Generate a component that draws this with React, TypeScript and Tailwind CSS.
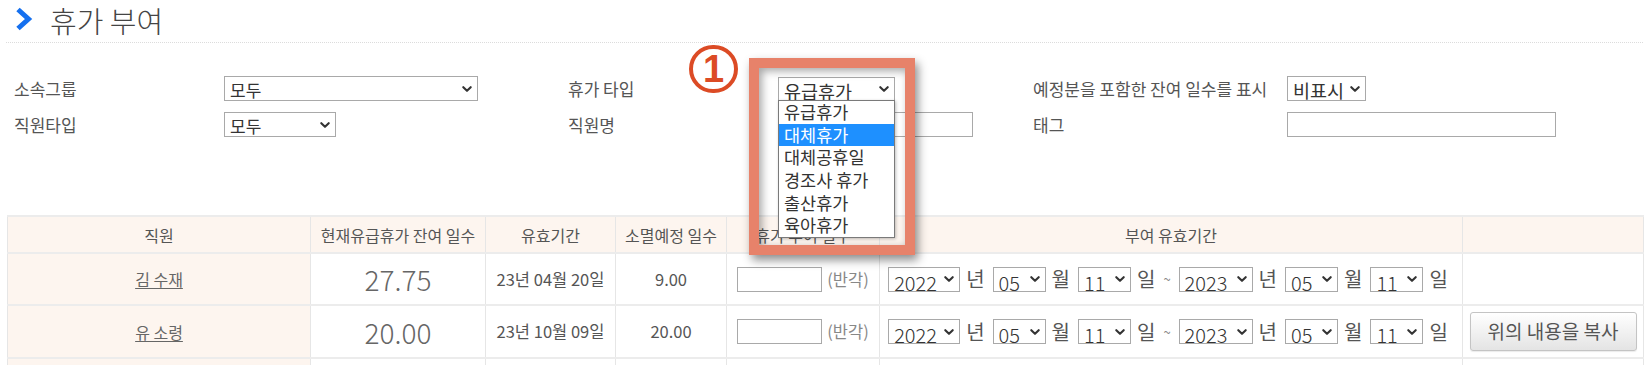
import React from 'react';

const FONT = "font-['Noto_Sans_CJK_KR','Noto_Sans',sans-serif]";

const Chevron: React.FC<{ className?: string }> = ({ className = '' }) => (
  <svg viewBox="0 0 10 6" className={className} fill="none" stroke="#333" strokeWidth="2.1" strokeLinecap="round" strokeLinejoin="round">
    <path d="M1.3 1.2L5 4.8 8.7 1.2" />
  </svg>
);

interface SelectBoxProps {
  value: string;
  options?: string[];
  className: string;
  textClass?: string;
}

const SelectBox: React.FC<SelectBoxProps> = ({ value, options, className, textClass = 'text-[17px]' }) => (
  <span className={`relative inline-block align-middle ${className}`}>
    <select
      defaultValue={value}
      className={`appearance-none w-full h-full border border-[#a9a9a9] bg-white pl-[5px] pr-[16px] text-[#333] outline-none rounded-none ${textClass}`}
    >
      {(options ?? [value]).map(o => <option key={o}>{o}</option>)}
    </select>
    <Chevron className="pointer-events-none absolute right-[6px] top-1/2 -translate-y-1/2 w-[10px] h-[6px]" />
  </span>
);

const DateRange: React.FC = () => {
  const unit = "mx-[6px] text-[20px] text-[#555] leading-none";
  const sel = "h-[25px]";
  const txt = "text-[20px] font-light";
  return (
    <div className="flex items-center justify-center">
      <SelectBox value="2022" className={`${sel} w-[72px]`} textClass={txt} />
      <span className={unit}>년</span>
      <SelectBox value="05" className={`${sel} w-[53px] ml-[2px]`} textClass={txt} />
      <span className={unit}>월</span>
      <SelectBox value="11" className={`${sel} w-[53px] ml-[2px]`} textClass={txt} />
      <span className={unit}>일</span>
      <span className="mx-[2px] text-[13px] text-[#888]">~</span>
      <SelectBox value="2023" className={`${sel} w-[74px] ml-[6px]`} textClass={txt} />
      <span className={unit}>년</span>
      <SelectBox value="05" className={`${sel} w-[53px] ml-[2px]`} textClass={txt} />
      <span className={unit}>월</span>
      <SelectBox value="11" className={`${sel} w-[53px] ml-[2px]`} textClass={txt} />
      <span className={unit}>일</span>
    </div>
  );
};

const rows = [
  { name: '김 수재', remain: '27.75', until: '23년 04월 20일', expire: '9.00', copy: false },
  { name: '유 소령', remain: '20.00', until: '23년 10월 09일', expire: '20.00', copy: true },
];

const leaveTypes = ['유급휴가', '대체휴가', '대체공휴일', '경조사 휴가', '출산휴가', '육아휴가'];

const App: React.FC = () => {
  const th = "border-x border-[#e6e6e6] font-normal text-[16px] text-[#555] text-center align-middle";
  const td = "border-x border-[#e6e6e6] text-center align-middle";

  return (
    <div className={`relative w-[1651px] h-[365px] overflow-hidden bg-white ${FONT}`}>
      <div className="ml-[6px] mr-[8px] h-[43px] flex items-center border-b border-dotted border-[#dcdcdc]">
        <svg viewBox="0 0 18 24" className="ml-[9px] w-[18px] h-[24px] -translate-y-[2px]" fill="none" stroke="#1570ef" strokeWidth="5" strokeLinejoin="miter">
          <path d="M3 2.5L13.5 12 3 21.5" />
        </svg>
        <h1 className="ml-[17px] text-[29px] leading-normal text-[#444] font-light">휴가 부여</h1>
      </div>

      <div className="mt-[33px] pl-[14px] grid grid-cols-[210px_344px_210px_255px_254px_1fr] grid-rows-[25px_25px] gap-y-[11px] items-center text-[17px] text-[#555]">
        <span>소속그룹</span>
        <SelectBox value="모두" className="h-[25px] w-[254px]" />
        <span>휴가 타입</span>
        <SelectBox value="유급휴가" options={leaveTypes} className="h-[24px] w-[117px]" textClass="text-[18.5px]" />
        <span>예정분을 포함한 잔여 일수를 표시</span>
        <SelectBox value="비표시" options={['비표시', '표시']} className="h-[25px] w-[79px]" textClass="text-[18.5px]" />

        <span>직원타입</span>
        <SelectBox value="모두" className="h-[25px] w-[112px]" />
        <span>직원명</span>
        <input type="text" className="h-[25px] w-[195px] border border-[#a9a9a9] bg-white outline-none" />
        <span>태그</span>
        <input type="text" className="h-[25px] w-[269px] border border-[#a9a9a9] bg-white outline-none" />
      </div>

      <table className="mt-[78px] ml-[7px] w-[1636px] table-fixed border-collapse">
        <colgroup>
          <col className="w-[303px]" />
          <col className="w-[175px]" />
          <col className="w-[130px]" />
          <col className="w-[111px]" />
          <col className="w-[153px]" />
          <col className="w-[583px]" />
          <col className="w-[181px]" />
        </colgroup>
        <thead>
          <tr className="h-[37px] bg-[#fdf5ef] border-y-2 border-[#ececec]">
            <th className={th}>직원</th>
            <th className={th}>현재유급휴가 잔여 일수</th>
            <th className={th}>유효기간</th>
            <th className={th}>소멸예정 일수</th>
            <th className={th}>휴가 부여 일수</th>
            <th className={th}>부여 유효기간</th>
            <th className={th}></th>
          </tr>
        </thead>
        <tbody>
          {rows.map((r, i) => (
            <tr key={r.name} className={`${i === 0 ? 'h-[52px]' : 'h-[53px]'} border-b-2 border-[#ececec]`}>
              <td className={`${td} bg-[#fdf5ef]`}>
                <a href="#" className="text-[16px] text-[#666] underline underline-offset-2">{r.name}</a>
              </td>
              <td className={`${td} text-[28px] font-light text-[#666]`}>{r.remain}</td>
              <td className={`${td} text-[16.5px] text-[#555]`}>{r.until}</td>
              <td className={`${td} text-[16.5px] text-[#555]`}>{r.expire}</td>
              <td className={td}>
                <div className="flex items-center justify-center">
                  <input type="text" className="h-[25px] w-[85px] border border-[#a9a9a9] bg-white outline-none" />
                  <span className="ml-[5px] text-[16.5px] text-[#888]">(반각)</span>
                </div>
              </td>
              <td className={td}>
                <DateRange />
              </td>
              <td className={td}>
                {r.copy && (
                  <button type="button" className="h-[39px] w-[167px] border border-[#c4c4c4] rounded-[3px] bg-linear-to-b from-white to-[#e4e4e4] text-[19px] text-[#555] shadow-[0_1px_1px_rgba(0,0,0,0.08)]">
                    위의 내용을 복사
                  </button>
                )}
              </td>
            </tr>
          ))}
          <tr className="h-[52px]">
            <td className={`${td} bg-[#fdf5ef]`}></td>
            <td className={td}></td>
            <td className={td}></td>
            <td className={td}></td>
            <td className={td}></td>
            <td className={td}></td>
            <td className={td}></td>
          </tr>
        </tbody>
      </table>

      {/* callout number */}
      <div className="absolute left-[689px] top-[45px] w-[49px] h-[48px] rounded-full border-[4px] border-[#dc4b25] flex items-center justify-center">
        <span className="text-[38px] font-black leading-none text-[#dc4b25] font-['Liberation_Sans',sans-serif]">1</span>
      </div>

      {/* highlight frame */}
      <div className="absolute left-[749px] top-[58px] w-[166px] h-[197px] border-[10px] border-[#e7826a] shadow-[3px_5px_9px_rgba(0,0,0,0.45),inset_3px_3px_9px_rgba(0,0,0,0.35)] pointer-events-none" />

      {/* open dropdown list */}
      <ul className="absolute left-[778px] top-[100px] w-[117px] border border-[#7a7a7a] bg-white text-[17.5px] text-[#333] shadow-[1px_1px_3px_rgba(0,0,0,0.25)]">
        {leaveTypes.map(t => (
          <li key={t} className={`h-[22.7px] leading-[22.7px] pl-[5px] whitespace-nowrap ${t === '대체휴가' ? 'bg-[#1e90ff] text-white' : ''}`}>
            {t}
          </li>
        ))}
      </ul>
    </div>
  );
};

export default App;
